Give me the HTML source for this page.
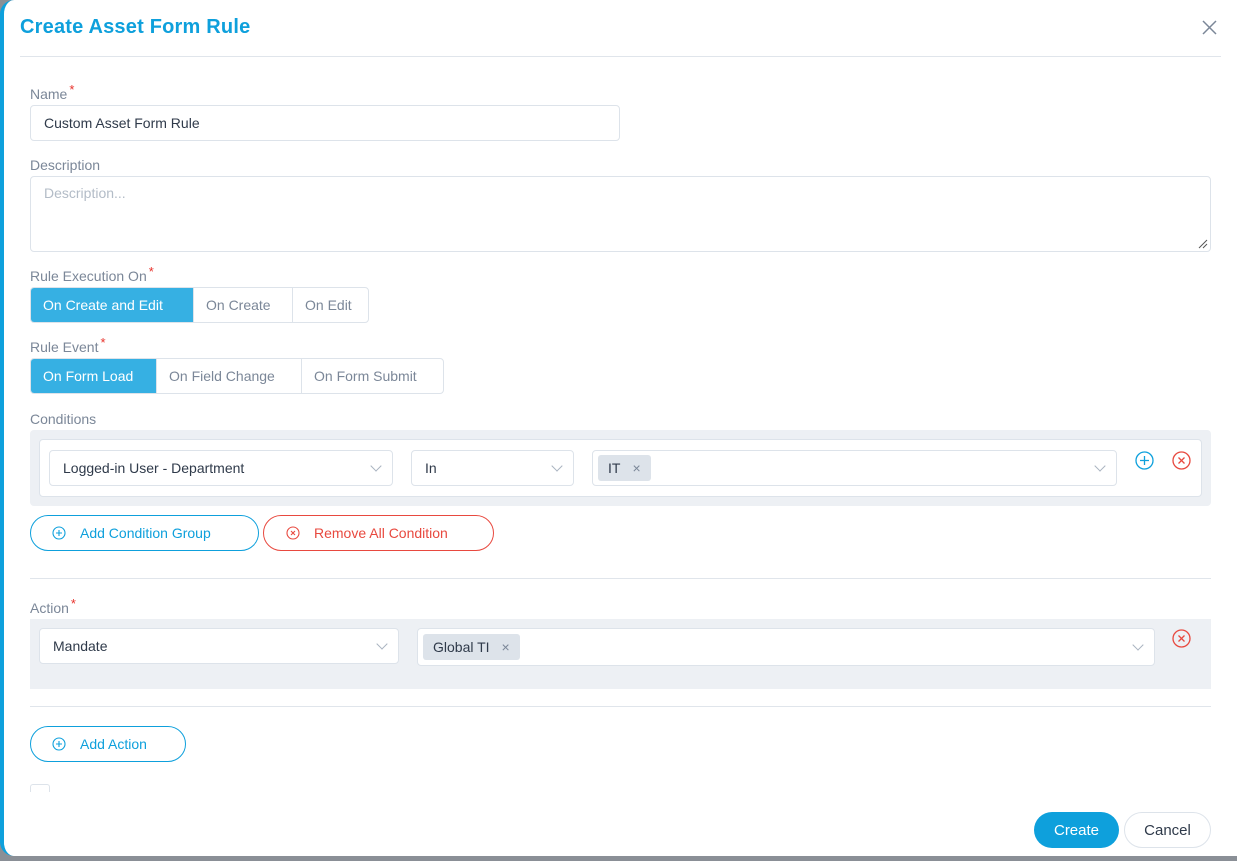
<!DOCTYPE html>
<html><head><meta charset="utf-8"><style>
*{box-sizing:border-box;margin:0;padding:0}
body{width:1237px;height:861px;overflow:hidden;background:#8a8f96;font-family:"Liberation Sans",sans-serif;position:relative}
.modal{position:absolute;left:0;top:0;width:1237px;height:856px;background:#fff;border-left:4px solid #0ea0dc;border-radius:14px 0 0 14px;overflow:hidden}
.a{position:absolute}
.lbl{font-size:14px;color:#7b8798}
.req{color:#e8312a;font-size:13px;vertical-align:top;position:relative;top:-4px;margin-left:2px}
.inp{border:1px solid #dde3ea;border-radius:4px;background:#fff;font-size:14px;color:#2f3a4a}
.seg{display:flex;border:1px solid #dde3ea;border-radius:4px;overflow:hidden;font-size:14px;color:#7b8798}
.seg div{padding:0 12px;border-left:1px solid #dde3ea;display:flex;align-items:center}
.seg div:first-child{border-left:none}
.seg .on{background:#36b0e3;color:#fff}
.chev{position:absolute;right:12px;top:50%;width:8px;height:8px;border-right:1px solid #a9b3c0;border-bottom:1px solid #a9b3c0;transform:translateY(-75%) rotate(45deg)}
.tag{position:absolute;background:#dde3ea;border-radius:3px;font-size:14px;color:#2f3a4a;padding:0 10px;display:flex;align-items:center}
.pill{position:absolute;border-radius:18px;font-size:14px;display:flex;align-items:center}
.hr{position:absolute;left:26px;width:1181px;height:1px;background:#e0e5eb}
</style></head><body>
<div class="modal">
<div class="a" style="left:16px;top:16px;font-size:20px;color:#0ea0dc;font-weight:600;letter-spacing:0.2px">Create Asset Form Rule</div>
<svg class="a" style="left:1198px;top:20px" width="15" height="15" viewBox="0 0 15 15"><path d="M1 1L14 14M14 1L1 14" stroke="#7b8798" stroke-width="1.5"/></svg>
<div class="hr" style="left:16px;width:1201px;top:56px"></div>

<div class="a lbl" style="left:26px;top:86px">Name<span class="req">*</span></div>
<div class="a inp" style="left:26px;top:105px;width:590px;height:36px;padding:9px 13px">Custom Asset Form Rule</div>

<div class="a lbl" style="left:26px;top:157px">Description</div>
<div class="a inp" style="left:26px;top:176px;width:1181px;height:76px;padding:8px 13px;color:#b3bcc7">Description...</div>
<svg class="a" style="left:1194px;top:239px" width="10" height="10"><path d="M1 9L9 1M5 9L9 5" stroke="#555" stroke-width="1"/></svg>

<div class="a lbl" style="left:26px;top:268px">Rule Execution On<span class="req">*</span></div>
<div class="a seg" style="left:26px;top:287px;height:36px"><div class="on" style="width:162px">On Create and Edit</div><div style="width:99px">On Create</div><div style="width:76px">On Edit</div></div>

<div class="a lbl" style="left:26px;top:339px">Rule Event<span class="req">*</span></div>
<div class="a seg" style="left:26px;top:358px;height:36px"><div class="on" style="width:125px">On Form Load</div><div style="width:145px">On Field Change</div><div style="width:142px">On Form Submit</div></div>

<div class="a lbl" style="left:26px;top:411px">Conditions</div>
<div class="a" style="left:26px;top:430px;width:1181px;height:76px;background:#edf0f4;border-radius:4px"></div>
<div class="a" style="left:35px;top:439px;width:1163px;height:58px;background:#fff;border:1px solid #dde3ea;border-radius:4px"></div>
<div class="a inp" style="left:45px;top:450px;width:344px;height:36px;padding:9px 13px">Logged-in User - Department<span class="chev"></span></div>
<div class="a inp" style="left:407px;top:450px;width:163px;height:36px;padding:9px 13px">In<span class="chev"></span></div>
<div class="a inp" style="left:588px;top:450px;width:525px;height:36px"><span class="chev"></span></div>
<div class="tag" style="left:594px;top:455px;height:26px">IT<span style="margin-left:12px;color:#7b8798">×</span></div>
<svg class="a" style="left:1131px;top:451px" width="19" height="19" viewBox="0 0 19 19"><circle cx="9.5" cy="9.5" r="8.5" fill="none" stroke="#0ea0dc" stroke-width="1.3"/><path d="M9.5 5v9M5 9.5h9" stroke="#0ea0dc" stroke-width="1.3"/></svg>
<svg class="a" style="left:1168px;top:451px" width="19" height="19" viewBox="0 0 19 19"><circle cx="9.5" cy="9.5" r="8.5" fill="none" stroke="#e8493f" stroke-width="1.3"/><path d="M6.5 6.5l6 6M12.5 6.5l-6 6" stroke="#e8493f" stroke-width="1.3"/></svg>

<div class="pill" style="left:26px;top:515px;width:229px;height:36px;border:1px solid #0ea0dc;color:#0ea0dc;padding-left:21px"><svg width="14" height="14" viewBox="0 0 14 14"><circle cx="7" cy="7" r="6" fill="none" stroke="#0ea0dc" stroke-width="1.1"/><path d="M7 4v6M4 7h6" stroke="#0ea0dc" stroke-width="1.1"/></svg><span style="margin-left:14px">Add Condition Group</span></div>
<div class="pill" style="left:259px;top:515px;width:231px;height:36px;border:1px solid #e8493f;color:#e8493f;padding-left:22px"><svg width="14" height="14" viewBox="0 0 14 14"><circle cx="7" cy="7" r="6" fill="none" stroke="#e8493f" stroke-width="1.1"/><path d="M5 5l4 4M9 5l-4 4" stroke="#e8493f" stroke-width="1.1"/></svg><span style="margin-left:14px">Remove All Condition</span></div>

<div class="hr" style="top:578px"></div>

<div class="a lbl" style="left:26px;top:600px">Action<span class="req">*</span></div>
<div class="a" style="left:26px;top:619px;width:1181px;height:70px;background:#edf0f4"></div>
<div class="a inp" style="left:35px;top:628px;width:360px;height:36px;padding:9px 13px">Mandate<span class="chev"></span></div>
<div class="a inp" style="left:413px;top:628px;width:738px;height:38px"><span class="chev"></span></div>
<div class="tag" style="left:419px;top:634px;height:26px">Global TI<span style="margin-left:12px;color:#7b8798">×</span></div>
<svg class="a" style="left:1168px;top:629px" width="19" height="19" viewBox="0 0 19 19"><circle cx="9.5" cy="9.5" r="8.5" fill="none" stroke="#e8493f" stroke-width="1.3"/><path d="M6.5 6.5l6 6M12.5 6.5l-6 6" stroke="#e8493f" stroke-width="1.3"/></svg>

<div class="hr" style="top:706px"></div>

<div class="pill" style="left:26px;top:726px;width:156px;height:36px;border:1px solid #0ea0dc;color:#0ea0dc;padding-left:21px"><svg width="14" height="14" viewBox="0 0 14 14"><circle cx="7" cy="7" r="6" fill="none" stroke="#0ea0dc" stroke-width="1.1"/><path d="M7 4v6M4 7h6" stroke="#0ea0dc" stroke-width="1.1"/></svg><span style="margin-left:14px">Add Action</span></div>

<div class="a" style="left:26px;top:784px;width:20px;height:8px;border:1px solid #dde3ea;border-bottom:none;border-radius:3px 3px 0 0"></div>
<div class="a" style="left:0;top:792px;width:1233px;height:64px;background:#fff"></div>

<div class="pill" style="left:1030px;top:812px;width:85px;height:36px;background:#0ea0dc;color:#fff;justify-content:center;font-size:15px">Create</div>
<div class="pill" style="left:1120px;top:812px;width:87px;height:36px;border:1px solid #dde3ea;color:#2f3a4a;justify-content:center;font-size:15px">Cancel</div>
</div>
</body></html>
